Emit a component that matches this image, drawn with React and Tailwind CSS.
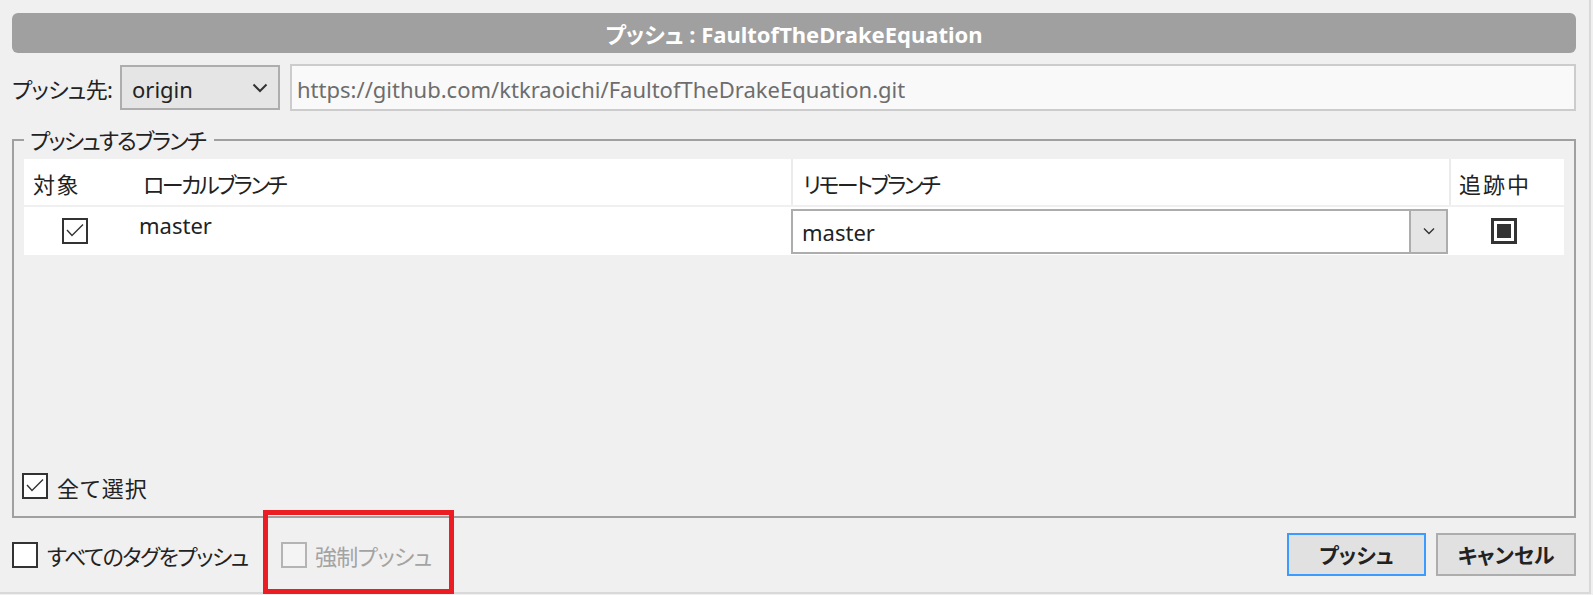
import React from "react";

function CheckBox({ checked = false, disabled = false }) {
  const border = disabled ? "border-[#b4b4b4] bg-[#f4f4f4]" : "border-[#333333] bg-white";
  return (
    <div className={`relative w-[26px] h-[26px] border-2 ${border} shrink-0`}>
      {checked && (
        <svg className="absolute left-0 top-0" width="22" height="22" viewBox="0 0 22 22">
          <polyline points="3,10 8,15.5 19,4.5" fill="none" stroke="#333" strokeWidth="1.4" />
        </svg>
      )}
    </div>
  );
}

function Indeterminate() {
  return (
    <div className="w-[26px] h-[26px] border-[3px] border-[#333333] bg-white flex items-center justify-center">
      <div className="w-[14px] h-[14px] bg-[#333333]" />
    </div>
  );
}

export default function App() {
  return (
    <div className="w-[1593px] h-[595px] bg-[#f0f0f0] overflow-hidden [font-family:'Noto_Sans','Noto_Sans_CJK_JP',sans-serif] [font-feature-settings:'palt'] text-[#222222] text-[22px] leading-none">
      <div className="relative w-[1591px] h-[594px] border-r-2 border-b-2 border-[#d9d9d9] flex flex-col">
        {/* Title */}
        <div className="ml-[12px] mt-[13px] w-[1564px] h-[40px] shrink-0 rounded-[6px] bg-[#a0a0a0] flex items-center justify-center text-white font-bold text-[22px] pt-[1px]">
          プッシュ : FaultofTheDrakeEquation
        </div>

        {/* Remote row */}
        <div className="ml-[12px] mt-[11px] w-[1564px] h-[47px] shrink-0 flex items-center">
          <div className="w-[108px] tracking-[-0.7px] pt-[2px]">プッシュ先:</div>
          <div className="w-[160px] h-[45px] border-2 border-[#adadad] bg-[#e5e5e5] flex items-center justify-between pl-[10px] pr-[10px]">
            <span className="pt-[2px]">origin</span>
            <svg width="16" height="10" viewBox="0 0 16 10">
              <polyline points="1.5,1.5 8,8 14.5,1.5" fill="none" stroke="#333" strokeWidth="2" />
            </svg>
          </div>
          <div className="ml-[10px] flex-1 h-[47px] border-2 border-[#cccccc] bg-[#f9f9f9] flex items-center pl-[5px] pt-[2px] text-[#6d6d6d]">
            https://github.com/ktkraoichi/FaultofTheDrakeEquation.git
          </div>
        </div>

        {/* Group box */}
        <div className="relative ml-[12px] mt-[28px] w-[1564px] h-[379px] shrink-0 border-2 border-[#a0a0a0] flex flex-col pt-[18px] px-[10px]">
          <div className="absolute left-[10px] top-[-15px] pl-[6px] pr-[9px] bg-[#f0f0f0] leading-[28px] tracking-[-1.9px]">
            プッシュするブランチ
          </div>

          {/* Table header */}
          <div className="h-[46px] bg-white flex items-stretch">
            <div className="w-[767px] flex items-center pt-[3px]">
              <span className="ml-[9px] w-[110px] tracking-[1.5px]">対象</span>
              <span className="tracking-[-2.5px]">ローカルブランチ</span>
            </div>
            <div className="w-[2px] bg-[#ebebeb]" />
            <div className="w-[656px] flex items-center pl-[10px] pt-[3px] tracking-[-2.5px]">リモートブランチ</div>
            <div className="w-[2px] bg-[#ebebeb]" />
            <div className="flex-1 flex items-center pl-[8px] pt-[3px] tracking-[2px]">追跡中</div>
          </div>

          {/* Data row */}
          <div className="mt-[2px] h-[48px] bg-white flex items-stretch">
            <div className="w-[767px] flex">
              <div className="w-[115px] flex items-center pl-[38px]">
                <CheckBox checked />
              </div>
              <div className="pt-[7px]">master</div>
            </div>
            <div className="w-[658px] flex items-center">
              <div className="w-[657px] h-[45px] border-2 border-[#adadad] bg-white flex items-stretch">
                <div className="flex-1 flex items-center pl-[9px] pt-[2px]">master</div>
                <div className="w-[37px] border-l-2 border-[#adadad] bg-[#e5e5e5] flex items-center justify-center">
                  <svg width="12" height="8" viewBox="0 0 12 8">
                    <polyline points="1,1.5 6,6.5 11,1.5" fill="none" stroke="#333" strokeWidth="1.4" />
                  </svg>
                </div>
              </div>
            </div>
            <div className="flex-1 flex items-center justify-center pr-[6px]">
              <Indeterminate />
            </div>
          </div>

          <div className="flex-1" />

          {/* Select all */}
          <div className="mb-[15px] h-[30px] flex items-center ml-[-2px]">
            <CheckBox checked />
            <span className="ml-[9px] pt-[3px] tracking-[1.2px]">全て選択</span>
          </div>
        </div>

        {/* Bottom row */}
        <div className="ml-[12px] mt-[15px] w-[1564px] h-[43px] flex items-center">
          <CheckBox />
          <span className="ml-[9px] pt-[2px] tracking-[-1.5px]">すべてのタグをプッシュ</span>
          <div className="ml-[33px]">
            <CheckBox disabled />
          </div>
          <span className="ml-[8px] pt-[2px] tracking-[-0.6px] text-[#a3a3a3]">強制プッシュ</span>
          <div className="flex-1" />
          <div className="w-[139px] h-[43px] border-2 border-[#3c9bff] bg-[#e1e1e1] flex items-center justify-center font-bold text-[21px] pt-[1px]">
            プッシュ
          </div>
          <div className="ml-[10px] w-[140px] h-[43px] border-2 border-[#adadad] bg-[#e1e1e1] flex items-center justify-center font-bold text-[21px] pt-[1px]">
            キャンセル
          </div>
        </div>

        {/* Red annotation */}
        <div className="absolute left-[263px] top-[510px] w-[191px] h-[84px] border-[5px] border-[#ec1c24]" />
      </div>
    </div>
  );
}
